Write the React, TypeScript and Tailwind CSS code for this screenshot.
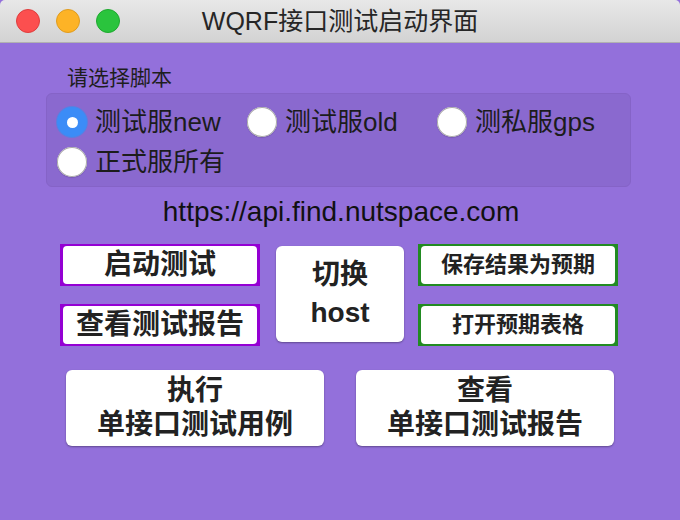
import React from 'react';

const font = { fontFamily: '"Liberation Sans", "Noto Sans CJK SC", sans-serif' };

const options = ['测试服new', '测试服old', '测私服gps', '正式服所有'];

const Radio: React.FC<{ label: string; checked: boolean; onClick: () => void; className?: string }> = ({
  label,
  checked,
  onClick,
  className,
}) => (
  <button onClick={onClick} className={`flex items-center gap-[8px] ${className ?? ''}`}>
    {checked ? (
      <span className="w-[30px] h-[30px] rounded-full bg-[#3b8cf7] flex items-center justify-center shadow-[0_0_0_1px_#5a7fe0]">
        <span className="w-[11px] h-[11px] rounded-full bg-white" />
      </span>
    ) : (
      <span className="w-[30px] h-[30px] rounded-full bg-white shadow-[inset_0_0_0_1px_#a8a8a8,0_1px_1px_rgba(0,0,0,0.15)]" />
    )}
    <span className="text-[26px] text-[#1c1c1c] leading-none">{label}</span>
  </button>
);

const FramedButton: React.FC<{ label: string; frame: string; size: string }> = ({ label, frame, size }) => (
  <div className={`w-[200px] h-[42px] px-[3px] py-[2px] ${frame}`}>
    <button className={`w-full h-full bg-white rounded-[4px] font-bold text-[#222] leading-none ${size}`}>{label}</button>
  </div>
);

export default function App() {
  const [selected, setSelected] = React.useState(0);

  return (
    <div style={font} className="w-[680px] h-[520px] bg-[#9370db] flex flex-col overflow-hidden">
      {/* Title bar */}
      <div className="h-[43px] bg-gradient-to-b from-[#e8e8e8] to-[#d3d3d3] border-b border-[#b1b1b1] flex items-center relative rounded-t-[5px]">
        <div className="flex items-center gap-[16px] pl-[16px]">
          <span className="w-[24px] h-[24px] rounded-full bg-[#fc4f4f] border border-[#df3d3d]" />
          <span className="w-[24px] h-[24px] rounded-full bg-[#fdb326] border border-[#e09c1e]" />
          <span className="w-[24px] h-[24px] rounded-full bg-[#2ac43d] border border-[#1ea92f]" />
        </div>
        <div className="absolute inset-0 flex items-center justify-center pt-[2px] text-[25px] text-[#262626]">
          WQRF接口测试启动界面
        </div>
      </div>

      <div className="flex flex-col px-[46px]">
        <div className="text-[21px] text-[#1e1e1e] pl-[21px] pt-[24px] leading-none">请选择脚本</div>

        <div className="mt-[5px] h-[94px] w-[585px] rounded-[6px] bg-[#8a69cf] border border-[#8563c7] pl-[10px] pt-[13px]">
          <div className="flex items-center h-[30px]">
            <Radio label={options[0]} checked={selected === 0} onClick={() => setSelected(0)} className="w-[190px]" />
            <Radio label={options[1]} checked={selected === 1} onClick={() => setSelected(1)} className="w-[190px]" />
            <Radio label={options[2]} checked={selected === 2} onClick={() => setSelected(2)} />
          </div>
          <div className="flex items-center h-[30px] mt-[10px]">
            <Radio label={options[3]} checked={selected === 3} onClick={() => setSelected(3)} />
          </div>
        </div>
      </div>

      <div className="text-center text-[28px] text-[#111] mt-[11px] pl-[2px] leading-[28px]">
        https://api.find.nutspace.com
      </div>

      {/* Main buttons */}
      <div className="flex mt-[18px] pl-[60px]">
        <div className="flex flex-col gap-[18px]">
          <FramedButton label="启动测试" frame="bg-[#9400d3]" size="text-[28px]" />
          <FramedButton label="查看测试报告" frame="bg-[#9400d3]" size="text-[28px]" />
        </div>
        <button className="ml-[16px] mt-[2px] w-[128px] h-[96px] bg-white rounded-[6px] shadow-[0_1px_2px_rgba(0,0,0,0.35)] font-bold text-[28px] text-[#222] leading-[38px] flex flex-col items-center justify-center">
          <span>切换</span>
          <span>host</span>
        </button>
        <div className="ml-[14px] flex flex-col gap-[18px]">
          <FramedButton label="保存结果为预期" frame="bg-[#228b22]" size="text-[22px]" />
          <FramedButton label="打开预期表格" frame="bg-[#228b22]" size="text-[22px]" />
        </div>
      </div>

      {/* Bottom buttons */}
      <div className="flex mt-[24px] pl-[66px] gap-[32px]">
        <button className="w-[258px] h-[76px] bg-white rounded-[6px] shadow-[0_1px_2px_rgba(0,0,0,0.35)] font-bold text-[28px] text-[#222] leading-[34px] flex flex-col items-center justify-center">
          <span>执行</span>
          <span>单接口测试用例</span>
        </button>
        <button className="w-[258px] h-[76px] bg-white rounded-[6px] shadow-[0_1px_2px_rgba(0,0,0,0.35)] font-bold text-[28px] text-[#222] leading-[34px] flex flex-col items-center justify-center">
          <span>查看</span>
          <span>单接口测试报告</span>
        </button>
      </div>
    </div>
  );
}
